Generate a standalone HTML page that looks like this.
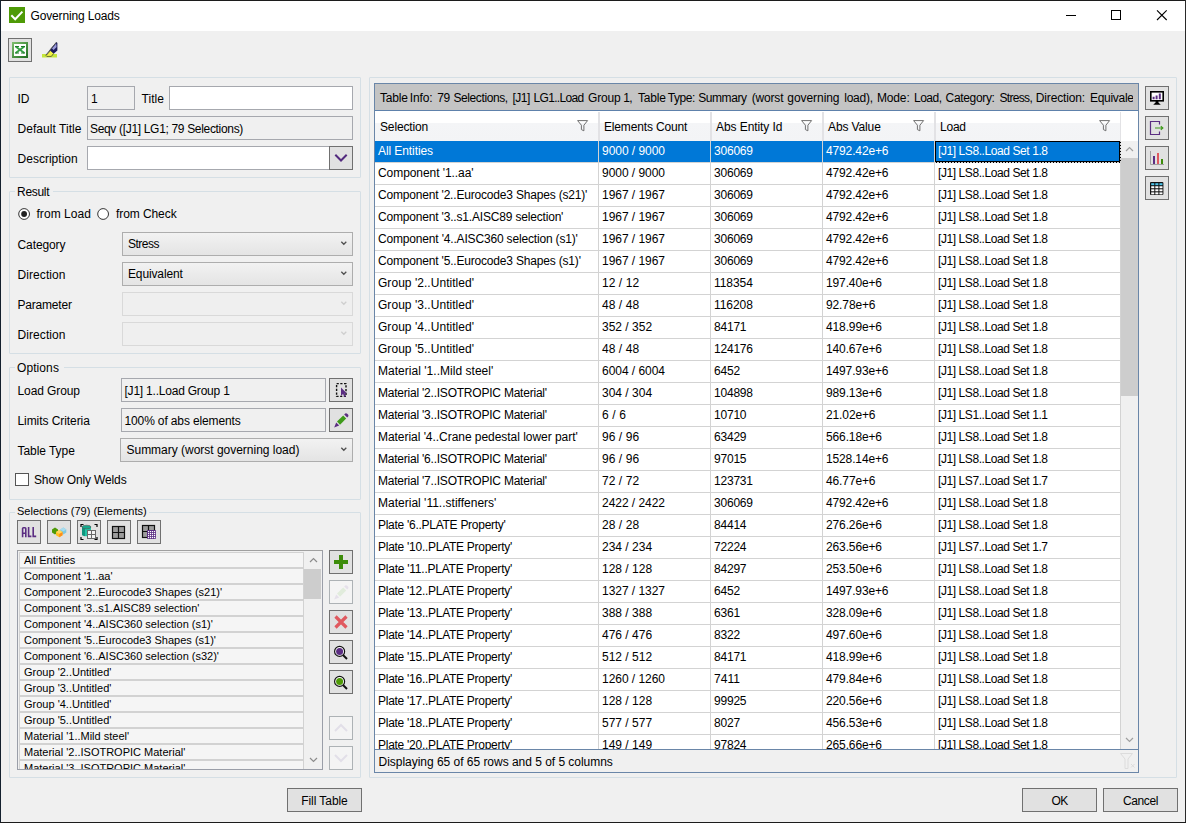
<!DOCTYPE html>
<html><head><meta charset="utf-8"><title>Governing Loads</title><style>

html,body{margin:0;padding:0}
body{width:1186px;height:823px;position:relative;overflow:hidden;background:#f0f0f0;font-family:"Liberation Sans", sans-serif;font-size:12px}
.b{position:absolute;box-sizing:border-box;display:block}
.t{position:absolute;white-space:nowrap;margin:0;padding:0}
.gb{border:1px solid #d5dfe5;border-radius:1px}
.in{border:1px solid #a6a8ae;background:#fff}
.ro{border:1px solid #a6a8ae;background:#f0f0f0}
.btn{border:1px solid #707070;background:#e1e1e1}
.btnd{border:1px solid #adb2b5;background:#f4f4f4}
.cb{border:1px solid #adadad;background:linear-gradient(#f2f2f2,#e4e4e4)}
.cbd{border:1px solid #d9d9d9;background:#efefef}
.tb{border:1px solid #adadad;background:#e1e1e1}

</style></head><body>
<div class="b" style="left:0px;top:0px;width:1186px;height:31px;background:#fff"></div>
<div class="b" style="left:0px;top:0px;width:1186px;height:1px;background:#1c1c1c"></div>
<div class="b" style="left:0px;top:0px;width:1px;height:823px;background:#14202e"></div>
<div class="b" style="left:1185px;top:0px;width:1px;height:823px;background:#2a2a2a"></div>
<div class="b" style="left:0px;top:822px;width:1186px;height:1px;background:#1c1c1c"></div>
<svg class="b" style="left:9px;top:7px" width="16" height="16" viewBox="0 0 16 16"><rect width="16" height="16" fill="#4e9a06"/><path d="M2.3 8.2 L6.2 12.2 L13.4 4.6" fill="none" stroke="#fff" stroke-width="2"/></svg>
<div class="t " style="left:30.5px;top:9px;line-height:14px;font-size:12px;color:#000;letter-spacing:-0.147px;">Governing Loads</div>
<svg class="b" style="left:1060px;top:5px" width="120" height="22" viewBox="0 0 120 22"><path d="M6 10.5H16" stroke="#000" stroke-width="1"/><rect x="51.5" y="5.5" width="9" height="9" fill="none" stroke="#000" stroke-width="1"/><path d="M97 5.3L106.7 15M106.7 5.3L97 15" stroke="#000" stroke-width="1.1"/></svg>
<div class="b btn" style="left:8px;top:38px;width:24px;height:24px;"></div>
<svg class="b" style="left:12px;top:42px" width="16" height="16" viewBox="0 0 16 16"><defs><linearGradient id="xg" x1="0" y1="0" x2="1" y2="1"><stop offset="0" stop-color="#7fbf6f"/><stop offset="1" stop-color="#1d6b1d"/></linearGradient></defs><rect width="16" height="16" fill="url(#xg)"/><rect x="2" y="2" width="12" height="12" fill="#fff"/><path d="M3.6 4.6L12.4 11M12.4 4.6L3.6 11" stroke="#35a044" stroke-width="1.9"/><path d="M3 4.5h4M9 4.5h4M3 11h4M9 11h4" stroke="#1f7a2a" stroke-width="1.2"/></svg>
<svg class="b" style="left:42px;top:41px" width="16" height="17" viewBox="0 0 16 17"><rect x="0" y="13" width="15" height="3.5" fill="#c4e63c"/><path d="M4 14.6L8.6 9.4L11.6 12.4L9.4 15.4H4.8Z" fill="#f2f244" stroke="#4a5030" stroke-width=".8"/><path d="M7.6 9L14.6 .9L15.4 2V9.4L11.8 12.6Z" fill="#1c1c5c"/><path d="M10 7.4L14.2 2.6L14.6 6L11.6 9Z" fill="#9a9ad8"/><path d="M4 14L14.4 1.2" stroke="#555" stroke-width="1"/></svg>
<div class="b gb" style="left:9px;top:77px;width:352px;height:101px"></div>
<div class="b gb" style="left:9px;top:191px;width:352px;height:163px"></div>
<div class="b" style="left:15px;top:191px;width:38px;height:1px;background:#f0f0f0"></div>
<div class="t " style="left:17px;top:185px;line-height:14px;font-size:12px;color:#000;letter-spacing:-0.285px;">Result</div>
<div class="b gb" style="left:9px;top:367px;width:352px;height:133px"></div>
<div class="b" style="left:15px;top:367px;width:49px;height:1px;background:#f0f0f0"></div>
<div class="t " style="left:17px;top:361px;line-height:14px;font-size:12px;color:#000;letter-spacing:0.088px;">Options</div>
<div class="b gb" style="left:9px;top:512px;width:352px;height:266px"></div>
<div class="b" style="left:15px;top:512px;width:134px;height:1px;background:#f0f0f0"></div>
<div class="t " style="left:17px;top:505px;line-height:13px;font-size:11px;color:#000;">Selections (79) (Elements)</div>
<div class="b gb" style="left:369px;top:77px;width:808px;height:701px"></div>
<div class="t " style="left:17.5px;top:92px;line-height:14px;font-size:12px;color:#000;letter-spacing:-0.196px;">ID</div>
<div class="b ro" style="left:87px;top:86px;width:48px;height:24px"></div>
<div class="t " style="left:91px;top:92px;line-height:14px;font-size:12px;color:#000;letter-spacing:-0.219px;">1</div>
<div class="t " style="left:141.5px;top:92px;line-height:14px;font-size:12px;color:#000;letter-spacing:0.041px;">Title</div>
<div class="b in" style="left:169px;top:86px;width:184px;height:24px"></div>
<div class="t " style="left:17.5px;top:122px;line-height:14px;font-size:12px;color:#000;letter-spacing:0.051px;">Default Title</div>
<div class="b ro" style="left:87px;top:116px;width:266px;height:24px"></div>
<div class="t " style="left:90px;top:122px;line-height:14px;font-size:12px;color:#000;letter-spacing:-0.326px;">Seqv ([J1] LG1; 79 Selections)</div>
<div class="t " style="left:17.5px;top:152px;line-height:14px;font-size:12px;color:#000;letter-spacing:0.019px;">Description</div>
<div class="b in" style="left:87px;top:146px;width:243px;height:24px"></div>
<div class="b btn" style="left:329px;top:146px;width:24px;height:24px"></div>
<svg class="b" style="left:329px;top:146px" width="24" height="24" viewBox="0 0 24 24"><path d="M6.3 8.8L12 14.5L17.7 8.8" fill="none" stroke="#532a7e" stroke-width="2"/></svg>
<svg class="b" style="left:18px;top:208px" width="13" height="13" viewBox="0 0 13 13"><circle cx="6.1" cy="6" r="5.4" fill="#fff" stroke="#333" stroke-width="1"/><circle cx="6.1" cy="6" r="2.9" fill="#222"/></svg>
<div class="t " style="left:36.5px;top:207px;line-height:14px;font-size:12px;color:#000;letter-spacing:0.041px;">from Load</div>
<svg class="b" style="left:97px;top:208px" width="13" height="13" viewBox="0 0 13 13"><circle cx="6.1" cy="6" r="5.4" fill="#fff" stroke="#333" stroke-width="1"/></svg>
<div class="t " style="left:116px;top:207px;line-height:14px;font-size:12px;color:#000;letter-spacing:-0.079px;">from Check</div>
<div class="t " style="left:17.5px;top:238px;line-height:14px;font-size:12px;color:#000;letter-spacing:-0.097px;">Category</div>
<div class="b cb" style="left:122px;top:232px;width:231px;height:24px"></div>
<svg class="b" style="left:339px;top:240px" width="9" height="8" viewBox="0 0 9 8"><path d="M2.3 1.8L4.8 4.3L7.3 1.8" fill="none" stroke="#505050" stroke-width="1.3"/></svg>
<div class="t " style="left:128px;top:237px;line-height:14px;font-size:12px;color:#000;letter-spacing:-0.492px;">Stress</div>
<div class="t " style="left:17.5px;top:268px;line-height:14px;font-size:12px;color:#000;letter-spacing:0.082px;">Direction</div>
<div class="b cb" style="left:122px;top:262px;width:231px;height:24px"></div>
<svg class="b" style="left:339px;top:270px" width="9" height="8" viewBox="0 0 9 8"><path d="M2.3 1.8L4.8 4.3L7.3 1.8" fill="none" stroke="#505050" stroke-width="1.3"/></svg>
<div class="t " style="left:128px;top:267px;line-height:14px;font-size:12px;color:#000;letter-spacing:-0.134px;">Equivalent</div>
<div class="t " style="left:17.5px;top:298px;line-height:14px;font-size:12px;color:#000;letter-spacing:-0.200px;">Parameter</div>
<div class="b cbd" style="left:122px;top:292px;width:231px;height:24px"></div>
<svg class="b" style="left:339px;top:300px" width="9" height="8" viewBox="0 0 9 8"><path d="M2.3 1.8L4.8 4.3L7.3 1.8" fill="none" stroke="#cfcfcf" stroke-width="1.3"/></svg>
<div class="t " style="left:17.5px;top:328px;line-height:14px;font-size:12px;color:#000;letter-spacing:0.082px;">Direction</div>
<div class="b cbd" style="left:122px;top:322px;width:231px;height:24px"></div>
<svg class="b" style="left:339px;top:330px" width="9" height="8" viewBox="0 0 9 8"><path d="M2.3 1.8L4.8 4.3L7.3 1.8" fill="none" stroke="#cfcfcf" stroke-width="1.3"/></svg>
<div class="t " style="left:17.5px;top:384px;line-height:14px;font-size:12px;color:#000;letter-spacing:-0.099px;">Load Group</div>
<div class="b ro" style="left:121px;top:378px;width:205px;height:24px"></div>
<div class="t " style="left:124.5px;top:384px;line-height:14px;font-size:12px;color:#000;letter-spacing:-0.215px;">[J1] 1..Load Group 1</div>
<div class="b btn" style="left:329px;top:378px;width:24px;height:24px"></div>
<svg class="b" style="left:329px;top:378px" width="24" height="24" viewBox="0 0 24 24"><rect x="7.6" y="5.6" width="9.4" height="12.8" fill="none" stroke="#111" stroke-width="1.4" stroke-dasharray="2.2 1.5"/><path d="M12 9.5V18L14 16L15.5 19L17 18.3L15.6 15.5H18Z" fill="#5b2d82"/></svg>
<div class="t " style="left:17.5px;top:414px;line-height:14px;font-size:12px;color:#000;letter-spacing:-0.072px;">Limits Criteria</div>
<div class="b ro" style="left:121px;top:408px;width:205px;height:24px"></div>
<div class="t " style="left:124.5px;top:414px;line-height:14px;font-size:12px;color:#000;letter-spacing:-0.131px;">100% of abs elements</div>
<div class="b btn" style="left:329px;top:408px;width:24px;height:24px"></div>
<svg class="b" style="left:329px;top:408px" width="24" height="24" viewBox="0 0 24 24"><g opacity="1"><path d="M8 13.6L14.2 7.6L17.2 10.6L11 16.8Z" fill="#3f9a1a"/><path d="M15.2 6.6L16.2 5.6Q17.2 4.9 18.2 5.8L19 6.6Q19.9 7.6 19.2 8.6L18.2 9.6Z" fill="#5b2d82"/><path d="M7.2 14.4L10.2 17.4L5.2 19.4Z" fill="#5b2d82"/></g></svg>
<div class="t " style="left:17.5px;top:444px;line-height:14px;font-size:12px;color:#000;letter-spacing:-0.050px;">Table Type</div>
<div class="b cb" style="left:120px;top:438px;width:233px;height:24px"></div>
<svg class="b" style="left:339px;top:446px" width="9" height="8" viewBox="0 0 9 8"><path d="M2.3 1.8L4.8 4.3L7.3 1.8" fill="none" stroke="#505050" stroke-width="1.3"/></svg>
<div class="t " style="left:126.5px;top:443px;line-height:14px;font-size:12px;color:#000;letter-spacing:-0.017px;">Summary (worst governing load)</div>
<div class="b" style="left:15px;top:473px;width:14px;height:13px;border:1px solid #555;background:#fff"></div>
<div class="t " style="left:34px;top:473px;line-height:14px;font-size:12px;color:#000;letter-spacing:-0.131px;">Show Only Welds</div>
<div class="b btn" style="left:17px;top:520px;width:24px;height:24px"></div>
<div class="b btn" style="left:47px;top:520px;width:24px;height:24px"></div>
<div class="b btn" style="left:77px;top:520px;width:24px;height:24px"></div>
<div class="b btn" style="left:107px;top:520px;width:24px;height:24px"></div>
<div class="b btn" style="left:137px;top:520px;width:24px;height:24px"></div>
<svg class="b" style="left:17px;top:520px" width="24" height="24" viewBox="0 0 24 24"><path d="M5.6 17.2V8.6Q5.6 7.8 6.4 7.8H8Q8.8 7.8 8.8 8.6V17.2M5.6 13.2H8.8M11.6 7V16.4H14.4M16.2 7V16.4H19.2" fill="none" stroke="#5b2d82" stroke-width="1.6"/></svg>
<svg class="b" style="left:47px;top:520px" width="24" height="24" viewBox="0 0 24 24"><path d="M5 9.5L8 7.5L11 9.5V12.5L8 14.5L5 12.5Z" fill="#4e9a06"/><path d="M13.3 9.5L16.3 7.5L19.3 9.5V12.5L16.3 14.5L13.3 12.5Z" fill="#7ec8e3"/><path d="M13.3 9.5L16.3 11.2L19.3 9.5L16.3 7.5Z" fill="#a8dcee"/><path d="M9 12L12.2 10L15.5 12V15.2L12.2 17.2L9 15.2Z" fill="#ffc020"/><path d="M12.2 13.8L15.5 12V15.2L12.2 17.2Z" fill="#ff8c1a"/><path d="M9 12L12.2 13.8L15.5 12L12.2 10Z" fill="#ffd860"/></svg>
<svg class="b" style="left:77px;top:520px" width="24" height="24" viewBox="0 0 24 24"><path d="M4 7V4.5H6.5M17.5 4.5H20V7M20 17V19.5H17.5M6.5 19.5H4V17" fill="none" stroke="#000" stroke-width="1.2"/><path d="M5 7V15Q9.5 17.5 14 15V7Z" fill="#20c4a4"/><path d="M5 7V15Q6.5 15.9 8 16.2V8Z" fill="#10937c"/><ellipse cx="9.5" cy="7" rx="4.5" ry="1.8" fill="#17a88c" stroke="#555" stroke-width=".6"/><rect x="10.5" y="10.5" width="8" height="8" fill="#f4f4f4" stroke="#6a6a6a" stroke-width="1"/><path d="M14.5 10.5V18.5M10.5 14.5H18.5" stroke="#6a6a6a" stroke-width="1"/></svg>
<svg class="b" style="left:107px;top:520px" width="24" height="24" viewBox="0 0 24 24"><rect x="5.5" y="6.5" width="12" height="12" fill="#9c9c9c" stroke="#111" stroke-width="1.2"/><path d="M11.5 6.5V18.5M5.5 12.5H17.5" stroke="#111" stroke-width="1.2"/></svg>
<svg class="b" style="left:137px;top:520px" width="24" height="24" viewBox="0 0 24 24"><rect x="5.5" y="5.5" width="12" height="12" fill="#9c9c9c" stroke="#111" stroke-width="1.2"/><path d="M11.5 5.5V17.5M5.5 11.5H17.5" stroke="#111" stroke-width="1.2"/><rect x="10" y="10" width="9" height="9" rx="1" fill="#5b2d82"/><rect x="11" y="11" width="1.2" height="1.2" fill="#fff"/><rect x="13" y="11" width="1.2" height="1.2" fill="#fff"/><rect x="15" y="11" width="1.2" height="1.2" fill="#fff"/><rect x="17" y="11" width="1.2" height="1.2" fill="#fff"/><rect x="11" y="13" width="1.2" height="1.2" fill="#fff"/><rect x="13" y="13" width="1.2" height="1.2" fill="#fff"/><rect x="15" y="13" width="1.2" height="1.2" fill="#fff"/><rect x="17" y="13" width="1.2" height="1.2" fill="#fff"/><rect x="11" y="15" width="1.2" height="1.2" fill="#fff"/><rect x="13" y="15" width="1.2" height="1.2" fill="#fff"/><rect x="15" y="15" width="1.2" height="1.2" fill="#fff"/><rect x="17" y="15" width="1.2" height="1.2" fill="#fff"/><rect x="11" y="17" width="1.2" height="1.2" fill="#fff"/><rect x="13" y="17" width="1.2" height="1.2" fill="#fff"/><rect x="15" y="17" width="1.2" height="1.2" fill="#fff"/><rect x="17" y="17" width="1.2" height="1.2" fill="#fff"/></svg>
<div class="b" style="left:17px;top:550px;width:306px;height:220px;border:1px solid #9a9ea8;background:#f0f0f0;border-top-color:#a0a0a0"></div>
<div class="b" style="left:18px;top:551px;width:304px;height:218px;overflow:hidden">
<div class="b" style="left:1px;top:1px;width:285px;height:16px;border:1px solid #d2d2d2;background:#f5f5f5"></div>
<div class="t" style="left:6px;top:3px;font-size:11px;line-height:13px;">All Entities</div>
<div class="b" style="left:1px;top:17px;width:285px;height:16px;border:1px solid #d2d2d2;background:#f5f5f5"></div>
<div class="t" style="left:6px;top:19px;font-size:11px;line-height:13px;">Component &#x27;1..aa&#x27;</div>
<div class="b" style="left:1px;top:33px;width:285px;height:16px;border:1px solid #d2d2d2;background:#f5f5f5"></div>
<div class="t" style="left:6px;top:35px;font-size:11px;line-height:13px;">Component &#x27;2..Eurocode3 Shapes (s21)&#x27;</div>
<div class="b" style="left:1px;top:49px;width:285px;height:16px;border:1px solid #d2d2d2;background:#f5f5f5"></div>
<div class="t" style="left:6px;top:51px;font-size:11px;line-height:13px;">Component &#x27;3..s1.AISC89 selection&#x27;</div>
<div class="b" style="left:1px;top:65px;width:285px;height:16px;border:1px solid #d2d2d2;background:#f5f5f5"></div>
<div class="t" style="left:6px;top:67px;font-size:11px;line-height:13px;">Component &#x27;4..AISC360 selection (s1)&#x27;</div>
<div class="b" style="left:1px;top:81px;width:285px;height:16px;border:1px solid #d2d2d2;background:#f5f5f5"></div>
<div class="t" style="left:6px;top:83px;font-size:11px;line-height:13px;">Component &#x27;5..Eurocode3 Shapes (s1)&#x27;</div>
<div class="b" style="left:1px;top:97px;width:285px;height:16px;border:1px solid #d2d2d2;background:#f5f5f5"></div>
<div class="t" style="left:6px;top:99px;font-size:11px;line-height:13px;">Component &#x27;6..AISC360 selection (s32)&#x27;</div>
<div class="b" style="left:1px;top:113px;width:285px;height:16px;border:1px solid #d2d2d2;background:#f5f5f5"></div>
<div class="t" style="left:6px;top:115px;font-size:11px;line-height:13px;">Group &#x27;2..Untitled&#x27;</div>
<div class="b" style="left:1px;top:129px;width:285px;height:16px;border:1px solid #d2d2d2;background:#f5f5f5"></div>
<div class="t" style="left:6px;top:131px;font-size:11px;line-height:13px;">Group &#x27;3..Untitled&#x27;</div>
<div class="b" style="left:1px;top:145px;width:285px;height:16px;border:1px solid #d2d2d2;background:#f5f5f5"></div>
<div class="t" style="left:6px;top:147px;font-size:11px;line-height:13px;">Group &#x27;4..Untitled&#x27;</div>
<div class="b" style="left:1px;top:161px;width:285px;height:16px;border:1px solid #d2d2d2;background:#f5f5f5"></div>
<div class="t" style="left:6px;top:163px;font-size:11px;line-height:13px;">Group &#x27;5..Untitled&#x27;</div>
<div class="b" style="left:1px;top:177px;width:285px;height:16px;border:1px solid #d2d2d2;background:#f5f5f5"></div>
<div class="t" style="left:6px;top:179px;font-size:11px;line-height:13px;">Material &#x27;1..Mild steel&#x27;</div>
<div class="b" style="left:1px;top:193px;width:285px;height:16px;border:1px solid #d2d2d2;background:#f5f5f5"></div>
<div class="t" style="left:6px;top:195px;font-size:11px;line-height:13px;">Material &#x27;2..ISOTROPIC Material&#x27;</div>
<div class="b" style="left:1px;top:209px;width:285px;height:16px;border:1px solid #d2d2d2;background:#f5f5f5"></div>
<div class="t" style="left:6px;top:211px;font-size:11px;line-height:13px;">Material &#x27;3..ISOTROPIC Material&#x27;</div>
</div>
<div class="b" style="left:304px;top:551px;width:18px;height:218px;background:#f0f0f0"></div>
<div class="b" style="left:304px;top:569px;width:17px;height:30px;background:#cdcdcd"></div>
<svg class="b" style="left:309px;top:556px" width="9" height="8" viewBox="0 0 9 8"><path d="M1 6L4.5 2.5L8 6" fill="none" stroke="#8c8c8c" stroke-width="1.2"/></svg>
<svg class="b" style="left:309px;top:756px" width="9" height="8" viewBox="0 0 9 8"><path d="M1 2L4.5 5.5L8 2" fill="none" stroke="#8c8c8c" stroke-width="1.2"/></svg>
<div class="b btn" style="left:329px;top:550px;width:24px;height:24px"></div>
<svg class="b" style="left:329px;top:550px" width="24" height="24" viewBox="0 0 24 24"><path d="M5 12H19M12 5V19" stroke="#3d8c0a" stroke-width="4"/></svg>
<div class="b btnd" style="left:329px;top:580px;width:24px;height:24px"></div>
<svg class="b" style="left:329px;top:580px" width="24" height="24" viewBox="0 0 24 24"><g opacity="1"><path d="M8 13.6L14.2 7.6L17.2 10.6L11 16.8Z" fill="#e1ecdc"/><path d="M15.2 6.6L16.2 5.6Q17.2 4.9 18.2 5.8L19 6.6Q19.9 7.6 19.2 8.6L18.2 9.6Z" fill="#e5e0ea"/><path d="M7.2 14.4L10.2 17.4L5.2 19.4Z" fill="#e5e0ea"/></g></svg>
<div class="b btn" style="left:329px;top:610px;width:24px;height:24px"></div>
<svg class="b" style="left:329px;top:610px" width="24" height="24" viewBox="0 0 24 24"><path d="M6.5 6.5L17.5 17.5M17.5 6.5L6.5 17.5" stroke="#e0595f" stroke-width="3.2"/></svg>
<div class="b btn" style="left:329px;top:640px;width:24px;height:24px"></div>
<svg class="b" style="left:329px;top:640px" width="24" height="24" viewBox="0 0 24 24"><path d="M14 15L18 19" stroke="#111" stroke-width="2"/><circle cx="10.6" cy="11.4" r="5" fill="#fff" stroke="#111" stroke-width="1.2"/><circle cx="10.6" cy="11.4" r="3.5" fill="#5b2d82"/></svg>
<div class="b btn" style="left:329px;top:670px;width:24px;height:24px"></div>
<svg class="b" style="left:329px;top:670px" width="24" height="24" viewBox="0 0 24 24"><path d="M14 15L18 19" stroke="#111" stroke-width="2"/><circle cx="10.6" cy="11.4" r="5" fill="#fff" stroke="#111" stroke-width="1.2"/><circle cx="10.6" cy="11.4" r="3.5" fill="#4e9a06"/></svg>
<div class="b btnd" style="left:329px;top:716px;width:24px;height:24px"></div>
<svg class="b" style="left:329px;top:716px" width="24" height="24" viewBox="0 0 24 24"><path d="M6 15L12 9L18 15" fill="none" stroke="#e2dfe8" stroke-width="2"/></svg>
<div class="b btnd" style="left:329px;top:746px;width:24px;height:24px"></div>
<svg class="b" style="left:329px;top:746px" width="24" height="24" viewBox="0 0 24 24"><path d="M6 9L12 15L18 9" fill="none" stroke="#e2dfe8" stroke-width="2"/></svg>
<div class="b btn" style="left:287px;top:788px;width:75px;height:24px"></div>
<div class="t " style="left:287px;top:794px;line-height:14px;font-size:12px;color:#000;letter-spacing:-0.065px;width:75px;text-align:center;">Fill Table</div>
<div class="b btn" style="left:1022px;top:788px;width:75px;height:24px"></div>
<div class="t " style="left:1022px;top:794px;line-height:14px;font-size:12px;color:#000;letter-spacing:-0.668px;width:75px;text-align:center;">OK</div>
<div class="b btn" style="left:1103px;top:788px;width:75px;height:24px"></div>
<div class="t " style="left:1103px;top:794px;line-height:14px;font-size:12px;color:#000;letter-spacing:-0.386px;width:75px;text-align:center;">Cancel</div>
<div class="b" style="left:374px;top:83px;width:765px;height:690px;border:1px solid #6a86a8;background:#fff"></div>
<div class="b" style="left:375px;top:84px;width:763px;height:26px;background:#c4c4c4;overflow:hidden"></div>
<div class="b" style="left:375px;top:84px;width:758px;height:26px;overflow:hidden">
<div class="t" style="left:5.0px;top:7px;line-height:14px;letter-spacing:-0.183px;">Table</div>
<div class="t" style="left:34.8px;top:7px;line-height:14px;letter-spacing:-0.140px;">Info:</div>
<div class="t" style="left:62.2px;top:7px;line-height:14px;letter-spacing:-0.405px;">79</div>
<div class="t" style="left:78.5px;top:7px;line-height:14px;letter-spacing:-0.412px;">Selections,</div>
<div class="t" style="left:137.4px;top:7px;line-height:14px;letter-spacing:-0.474px;">[J1]</div>
<div class="t" style="left:158.6px;top:7px;line-height:14px;letter-spacing:-0.689px;">LG1..Load</div>
<div class="t" style="left:213.1px;top:7px;line-height:14px;letter-spacing:-0.215px;">Group</div>
<div class="t" style="left:248.2px;top:7px;line-height:14px;letter-spacing:-0.609px;">1,</div>
<div class="t" style="left:262.9px;top:7px;line-height:14px;letter-spacing:-0.183px;">Table</div>
<div class="t" style="left:292.8px;top:7px;line-height:14px;letter-spacing:-0.437px;">Type:</div>
<div class="t" style="left:323.2px;top:7px;line-height:14px;letter-spacing:-0.420px;">Summary</div>
<div class="t" style="left:376.7px;top:7px;line-height:14px;letter-spacing:-0.170px;">(worst</div>
<div class="t" style="left:412.3px;top:7px;line-height:14px;letter-spacing:-0.058px;">governing</div>
<div class="t" style="left:469.3px;top:7px;line-height:14px;letter-spacing:-0.266px;">load),</div>
<div class="t" style="left:501.9px;top:7px;line-height:14px;letter-spacing:-0.129px;">Mode:</div>
<div class="t" style="left:539.0px;top:7px;line-height:14px;letter-spacing:-0.491px;">Load,</div>
<div class="t" style="left:570.6px;top:7px;line-height:14px;letter-spacing:-0.336px;">Category:</div>
<div class="t" style="left:624.4px;top:7px;line-height:14px;letter-spacing:-0.669px;">Stress,</div>
<div class="t" style="left:660.8px;top:7px;line-height:14px;letter-spacing:-0.151px;">Direction:</div>
<div class="t" style="left:715.0px;top:7px;line-height:14px;letter-spacing:-0.298px;">Equivalent</div>
</div>
<div class="b" style="left:375px;top:110px;width:763px;height:1px;background:#5e81ab"></div>
<div class="b" style="left:375px;top:111px;width:746px;height:30px;background:linear-gradient(#fff 0,#fff 40%,#f4f5f7 41%,#f3f4f6 100%)"></div>
<div class="t " style="left:380px;top:120px;line-height:14px;font-size:12px;color:#000;letter-spacing:-0.136px;">Selection</div>
<svg class="b" style="left:577px;top:120px" width="12" height="12" viewBox="0 0 12 12"><path d="M.6 .6H10.6L6.9 5.2V10.8L4.4 9.6V5.2Z" fill="none" stroke="#707070" stroke-width="1"/></svg>
<div class="t " style="left:604px;top:120px;line-height:14px;font-size:12px;color:#000;letter-spacing:-0.158px;">Elements Count</div>
<div class="b" style="left:598px;top:112px;width:2px;height:29px;background:#e2e2e5"></div>
<div class="t " style="left:716px;top:120px;line-height:14px;font-size:12px;color:#000;letter-spacing:-0.075px;">Abs Entity Id</div>
<div class="b" style="left:710px;top:112px;width:2px;height:29px;background:#e2e2e5"></div>
<svg class="b" style="left:801px;top:120px" width="12" height="12" viewBox="0 0 12 12"><path d="M.6 .6H10.6L6.9 5.2V10.8L4.4 9.6V5.2Z" fill="none" stroke="#707070" stroke-width="1"/></svg>
<div class="t " style="left:828px;top:120px;line-height:14px;font-size:12px;color:#000;letter-spacing:-0.121px;">Abs Value</div>
<div class="b" style="left:822px;top:112px;width:2px;height:29px;background:#e2e2e5"></div>
<svg class="b" style="left:913px;top:120px" width="12" height="12" viewBox="0 0 12 12"><path d="M.6 .6H10.6L6.9 5.2V10.8L4.4 9.6V5.2Z" fill="none" stroke="#707070" stroke-width="1"/></svg>
<div class="t " style="left:940px;top:120px;line-height:14px;font-size:12px;color:#000;letter-spacing:-0.219px;">Load</div>
<div class="b" style="left:934px;top:112px;width:2px;height:29px;background:#e2e2e5"></div>
<svg class="b" style="left:1099px;top:120px" width="12" height="12" viewBox="0 0 12 12"><path d="M.6 .6H10.6L6.9 5.2V10.8L4.4 9.6V5.2Z" fill="none" stroke="#707070" stroke-width="1"/></svg>
<div class="b" style="left:1120px;top:112px;width:1px;height:29px;background:#e2e2e5"></div>
<div class="b" style="left:375px;top:141px;width:746px;height:608px;overflow:hidden;background:#fff">
<div class="b" style="left:0;top:0px;width:746px;height:21px;background:#0078d7"></div>
<div class="b" style="left:0;top:21px;width:746px;height:1px;background:#d3d3d3"></div>
<div class="t" style="left:3px;top:3px;line-height:14px;color:#fff;letter-spacing:-0.085px;">All Entities</div>
<div class="t" style="left:227px;top:3px;line-height:14px;color:#fff;letter-spacing:-0.036px;">9000 / 9000</div>
<div class="t" style="left:339px;top:3px;line-height:14px;color:#fff;letter-spacing:-0.206px;">306069</div>
<div class="t" style="left:451px;top:3px;line-height:14px;color:#fff;letter-spacing:-0.137px;">4792.42e+6</div>
<div class="t" style="left:563px;top:3px;line-height:14px;color:#fff;letter-spacing:-0.416px;">[J1] LS8..Load Set 1.8</div>
<div class="b" style="left:0;top:43px;width:746px;height:1px;background:#d3d3d3"></div>
<div class="t" style="left:3px;top:25px;line-height:14px;color:#000;letter-spacing:-0.070px;">Component &#x27;1..aa&#x27;</div>
<div class="t" style="left:227px;top:25px;line-height:14px;color:#000;letter-spacing:-0.036px;">9000 / 9000</div>
<div class="t" style="left:339px;top:25px;line-height:14px;color:#000;letter-spacing:-0.206px;">306069</div>
<div class="t" style="left:451px;top:25px;line-height:14px;color:#000;letter-spacing:-0.137px;">4792.42e+6</div>
<div class="t" style="left:563px;top:25px;line-height:14px;color:#000;letter-spacing:-0.416px;">[J1] LS8..Load Set 1.8</div>
<div class="b" style="left:0;top:65px;width:746px;height:1px;background:#d3d3d3"></div>
<div class="t" style="left:3px;top:47px;line-height:14px;color:#000;letter-spacing:-0.185px;">Component &#x27;2..Eurocode3 Shapes (s21)&#x27;</div>
<div class="t" style="left:227px;top:47px;line-height:14px;color:#000;letter-spacing:-0.036px;">1967 / 1967</div>
<div class="t" style="left:339px;top:47px;line-height:14px;color:#000;letter-spacing:-0.206px;">306069</div>
<div class="t" style="left:451px;top:47px;line-height:14px;color:#000;letter-spacing:-0.137px;">4792.42e+6</div>
<div class="t" style="left:563px;top:47px;line-height:14px;color:#000;letter-spacing:-0.416px;">[J1] LS8..Load Set 1.8</div>
<div class="b" style="left:0;top:87px;width:746px;height:1px;background:#d3d3d3"></div>
<div class="t" style="left:3px;top:69px;line-height:14px;color:#000;letter-spacing:-0.180px;">Component &#x27;3..s1.AISC89 selection&#x27;</div>
<div class="t" style="left:227px;top:69px;line-height:14px;color:#000;letter-spacing:-0.036px;">1967 / 1967</div>
<div class="t" style="left:339px;top:69px;line-height:14px;color:#000;letter-spacing:-0.206px;">306069</div>
<div class="t" style="left:451px;top:69px;line-height:14px;color:#000;letter-spacing:-0.137px;">4792.42e+6</div>
<div class="t" style="left:563px;top:69px;line-height:14px;color:#000;letter-spacing:-0.416px;">[J1] LS8..Load Set 1.8</div>
<div class="b" style="left:0;top:109px;width:746px;height:1px;background:#d3d3d3"></div>
<div class="t" style="left:3px;top:91px;line-height:14px;color:#000;letter-spacing:-0.172px;">Component &#x27;4..AISC360 selection (s1)&#x27;</div>
<div class="t" style="left:227px;top:91px;line-height:14px;color:#000;letter-spacing:-0.036px;">1967 / 1967</div>
<div class="t" style="left:339px;top:91px;line-height:14px;color:#000;letter-spacing:-0.206px;">306069</div>
<div class="t" style="left:451px;top:91px;line-height:14px;color:#000;letter-spacing:-0.137px;">4792.42e+6</div>
<div class="t" style="left:563px;top:91px;line-height:14px;color:#000;letter-spacing:-0.416px;">[J1] LS8..Load Set 1.8</div>
<div class="b" style="left:0;top:131px;width:746px;height:1px;background:#d3d3d3"></div>
<div class="t" style="left:3px;top:113px;line-height:14px;color:#000;letter-spacing:-0.184px;">Component &#x27;5..Eurocode3 Shapes (s1)&#x27;</div>
<div class="t" style="left:227px;top:113px;line-height:14px;color:#000;letter-spacing:-0.036px;">1967 / 1967</div>
<div class="t" style="left:339px;top:113px;line-height:14px;color:#000;letter-spacing:-0.206px;">306069</div>
<div class="t" style="left:451px;top:113px;line-height:14px;color:#000;letter-spacing:-0.137px;">4792.42e+6</div>
<div class="t" style="left:563px;top:113px;line-height:14px;color:#000;letter-spacing:-0.416px;">[J1] LS8..Load Set 1.8</div>
<div class="b" style="left:0;top:153px;width:746px;height:1px;background:#d3d3d3"></div>
<div class="t" style="left:3px;top:135px;line-height:14px;color:#000;letter-spacing:0.041px;">Group &#x27;2..Untitled&#x27;</div>
<div class="t" style="left:227px;top:135px;line-height:14px;color:#000;letter-spacing:0.061px;">12 / 12</div>
<div class="t" style="left:339px;top:135px;line-height:14px;color:#000;letter-spacing:-0.057px;">118354</div>
<div class="t" style="left:451px;top:135px;line-height:14px;color:#000;letter-spacing:-0.129px;">197.40e+6</div>
<div class="t" style="left:563px;top:135px;line-height:14px;color:#000;letter-spacing:-0.416px;">[J1] LS8..Load Set 1.8</div>
<div class="b" style="left:0;top:175px;width:746px;height:1px;background:#d3d3d3"></div>
<div class="t" style="left:3px;top:157px;line-height:14px;color:#000;letter-spacing:0.041px;">Group &#x27;3..Untitled&#x27;</div>
<div class="t" style="left:227px;top:157px;line-height:14px;color:#000;letter-spacing:0.061px;">48 / 48</div>
<div class="t" style="left:339px;top:157px;line-height:14px;color:#000;letter-spacing:-0.057px;">116208</div>
<div class="t" style="left:451px;top:157px;line-height:14px;color:#000;letter-spacing:-0.120px;">92.78e+6</div>
<div class="t" style="left:563px;top:157px;line-height:14px;color:#000;letter-spacing:-0.416px;">[J1] LS8..Load Set 1.8</div>
<div class="b" style="left:0;top:197px;width:746px;height:1px;background:#d3d3d3"></div>
<div class="t" style="left:3px;top:179px;line-height:14px;color:#000;letter-spacing:0.041px;">Group &#x27;4..Untitled&#x27;</div>
<div class="t" style="left:227px;top:179px;line-height:14px;color:#000;letter-spacing:0.002px;">352 / 352</div>
<div class="t" style="left:339px;top:179px;line-height:14px;color:#000;letter-spacing:-0.206px;">84171</div>
<div class="t" style="left:451px;top:179px;line-height:14px;color:#000;letter-spacing:-0.129px;">418.99e+6</div>
<div class="t" style="left:563px;top:179px;line-height:14px;color:#000;letter-spacing:-0.416px;">[J1] LS8..Load Set 1.8</div>
<div class="b" style="left:0;top:219px;width:746px;height:1px;background:#d3d3d3"></div>
<div class="t" style="left:3px;top:201px;line-height:14px;color:#000;letter-spacing:0.041px;">Group &#x27;5..Untitled&#x27;</div>
<div class="t" style="left:227px;top:201px;line-height:14px;color:#000;letter-spacing:0.061px;">48 / 48</div>
<div class="t" style="left:339px;top:201px;line-height:14px;color:#000;letter-spacing:-0.206px;">124176</div>
<div class="t" style="left:451px;top:201px;line-height:14px;color:#000;letter-spacing:-0.129px;">140.67e+6</div>
<div class="t" style="left:563px;top:201px;line-height:14px;color:#000;letter-spacing:-0.416px;">[J1] LS8..Load Set 1.8</div>
<div class="b" style="left:0;top:241px;width:746px;height:1px;background:#d3d3d3"></div>
<div class="t" style="left:3px;top:223px;line-height:14px;color:#000;letter-spacing:0.029px;">Material &#x27;1..Mild steel&#x27;</div>
<div class="t" style="left:227px;top:223px;line-height:14px;color:#000;letter-spacing:-0.036px;">6004 / 6004</div>
<div class="t" style="left:339px;top:223px;line-height:14px;color:#000;letter-spacing:-0.207px;">6452</div>
<div class="t" style="left:451px;top:223px;line-height:14px;color:#000;letter-spacing:-0.137px;">1497.93e+6</div>
<div class="t" style="left:563px;top:223px;line-height:14px;color:#000;letter-spacing:-0.416px;">[J1] LS8..Load Set 1.8</div>
<div class="b" style="left:0;top:263px;width:746px;height:1px;background:#d3d3d3"></div>
<div class="t" style="left:3px;top:245px;line-height:14px;color:#000;letter-spacing:-0.222px;">Material &#x27;2..ISOTROPIC Material&#x27;</div>
<div class="t" style="left:227px;top:245px;line-height:14px;color:#000;letter-spacing:0.002px;">304 / 304</div>
<div class="t" style="left:339px;top:245px;line-height:14px;color:#000;letter-spacing:-0.206px;">104898</div>
<div class="t" style="left:451px;top:245px;line-height:14px;color:#000;letter-spacing:-0.129px;">989.13e+6</div>
<div class="t" style="left:563px;top:245px;line-height:14px;color:#000;letter-spacing:-0.416px;">[J1] LS8..Load Set 1.8</div>
<div class="b" style="left:0;top:285px;width:746px;height:1px;background:#d3d3d3"></div>
<div class="t" style="left:3px;top:267px;line-height:14px;color:#000;letter-spacing:-0.222px;">Material &#x27;3..ISOTROPIC Material&#x27;</div>
<div class="t" style="left:227px;top:267px;line-height:14px;color:#000;letter-spacing:0.167px;">6 / 6</div>
<div class="t" style="left:339px;top:267px;line-height:14px;color:#000;letter-spacing:-0.206px;">10710</div>
<div class="t" style="left:451px;top:267px;line-height:14px;color:#000;letter-spacing:-0.120px;">21.02e+6</div>
<div class="t" style="left:563px;top:267px;line-height:14px;color:#000;letter-spacing:-0.416px;">[J1] LS1..Load Set 1.1</div>
<div class="b" style="left:0;top:307px;width:746px;height:1px;background:#d3d3d3"></div>
<div class="t" style="left:3px;top:289px;line-height:14px;color:#000;letter-spacing:-0.043px;">Material &#x27;4..Crane pedestal lower part&#x27;</div>
<div class="t" style="left:227px;top:289px;line-height:14px;color:#000;letter-spacing:0.061px;">96 / 96</div>
<div class="t" style="left:339px;top:289px;line-height:14px;color:#000;letter-spacing:-0.206px;">63429</div>
<div class="t" style="left:451px;top:289px;line-height:14px;color:#000;letter-spacing:-0.129px;">566.18e+6</div>
<div class="t" style="left:563px;top:289px;line-height:14px;color:#000;letter-spacing:-0.416px;">[J1] LS8..Load Set 1.8</div>
<div class="b" style="left:0;top:329px;width:746px;height:1px;background:#d3d3d3"></div>
<div class="t" style="left:3px;top:311px;line-height:14px;color:#000;letter-spacing:-0.222px;">Material &#x27;6..ISOTROPIC Material&#x27;</div>
<div class="t" style="left:227px;top:311px;line-height:14px;color:#000;letter-spacing:0.061px;">96 / 96</div>
<div class="t" style="left:339px;top:311px;line-height:14px;color:#000;letter-spacing:-0.206px;">97015</div>
<div class="t" style="left:451px;top:311px;line-height:14px;color:#000;letter-spacing:-0.137px;">1528.14e+6</div>
<div class="t" style="left:563px;top:311px;line-height:14px;color:#000;letter-spacing:-0.416px;">[J1] LS8..Load Set 1.8</div>
<div class="b" style="left:0;top:351px;width:746px;height:1px;background:#d3d3d3"></div>
<div class="t" style="left:3px;top:333px;line-height:14px;color:#000;letter-spacing:-0.222px;">Material &#x27;7..ISOTROPIC Material&#x27;</div>
<div class="t" style="left:227px;top:333px;line-height:14px;color:#000;letter-spacing:0.061px;">72 / 72</div>
<div class="t" style="left:339px;top:333px;line-height:14px;color:#000;letter-spacing:-0.206px;">123731</div>
<div class="t" style="left:451px;top:333px;line-height:14px;color:#000;letter-spacing:-0.120px;">46.77e+6</div>
<div class="t" style="left:563px;top:333px;line-height:14px;color:#000;letter-spacing:-0.416px;">[J1] LS7..Load Set 1.7</div>
<div class="b" style="left:0;top:373px;width:746px;height:1px;background:#d3d3d3"></div>
<div class="t" style="left:3px;top:355px;line-height:14px;color:#000;letter-spacing:0.009px;">Material &#x27;11..stiffeners&#x27;</div>
<div class="t" style="left:227px;top:355px;line-height:14px;color:#000;letter-spacing:-0.036px;">2422 / 2422</div>
<div class="t" style="left:339px;top:355px;line-height:14px;color:#000;letter-spacing:-0.206px;">306069</div>
<div class="t" style="left:451px;top:355px;line-height:14px;color:#000;letter-spacing:-0.137px;">4792.42e+6</div>
<div class="t" style="left:563px;top:355px;line-height:14px;color:#000;letter-spacing:-0.416px;">[J1] LS8..Load Set 1.8</div>
<div class="b" style="left:0;top:395px;width:746px;height:1px;background:#d3d3d3"></div>
<div class="t" style="left:3px;top:377px;line-height:14px;color:#000;letter-spacing:-0.274px;">Plate &#x27;6..PLATE Property&#x27;</div>
<div class="t" style="left:227px;top:377px;line-height:14px;color:#000;letter-spacing:0.061px;">28 / 28</div>
<div class="t" style="left:339px;top:377px;line-height:14px;color:#000;letter-spacing:-0.206px;">84414</div>
<div class="t" style="left:451px;top:377px;line-height:14px;color:#000;letter-spacing:-0.129px;">276.26e+6</div>
<div class="t" style="left:563px;top:377px;line-height:14px;color:#000;letter-spacing:-0.416px;">[J1] LS8..Load Set 1.8</div>
<div class="b" style="left:0;top:417px;width:746px;height:1px;background:#d3d3d3"></div>
<div class="t" style="left:3px;top:399px;line-height:14px;color:#000;letter-spacing:-0.271px;">Plate &#x27;10..PLATE Property&#x27;</div>
<div class="t" style="left:227px;top:399px;line-height:14px;color:#000;letter-spacing:0.002px;">234 / 234</div>
<div class="t" style="left:339px;top:399px;line-height:14px;color:#000;letter-spacing:-0.206px;">72224</div>
<div class="t" style="left:451px;top:399px;line-height:14px;color:#000;letter-spacing:-0.129px;">263.56e+6</div>
<div class="t" style="left:563px;top:399px;line-height:14px;color:#000;letter-spacing:-0.416px;">[J1] LS7..Load Set 1.7</div>
<div class="b" style="left:0;top:439px;width:746px;height:1px;background:#d3d3d3"></div>
<div class="t" style="left:3px;top:421px;line-height:14px;color:#000;letter-spacing:-0.237px;">Plate &#x27;11..PLATE Property&#x27;</div>
<div class="t" style="left:227px;top:421px;line-height:14px;color:#000;letter-spacing:0.002px;">128 / 128</div>
<div class="t" style="left:339px;top:421px;line-height:14px;color:#000;letter-spacing:-0.206px;">84297</div>
<div class="t" style="left:451px;top:421px;line-height:14px;color:#000;letter-spacing:-0.129px;">253.50e+6</div>
<div class="t" style="left:563px;top:421px;line-height:14px;color:#000;letter-spacing:-0.416px;">[J1] LS8..Load Set 1.8</div>
<div class="b" style="left:0;top:461px;width:746px;height:1px;background:#d3d3d3"></div>
<div class="t" style="left:3px;top:443px;line-height:14px;color:#000;letter-spacing:-0.271px;">Plate &#x27;12..PLATE Property&#x27;</div>
<div class="t" style="left:227px;top:443px;line-height:14px;color:#000;letter-spacing:-0.036px;">1327 / 1327</div>
<div class="t" style="left:339px;top:443px;line-height:14px;color:#000;letter-spacing:-0.207px;">6452</div>
<div class="t" style="left:451px;top:443px;line-height:14px;color:#000;letter-spacing:-0.137px;">1497.93e+6</div>
<div class="t" style="left:563px;top:443px;line-height:14px;color:#000;letter-spacing:-0.416px;">[J1] LS8..Load Set 1.8</div>
<div class="b" style="left:0;top:483px;width:746px;height:1px;background:#d3d3d3"></div>
<div class="t" style="left:3px;top:465px;line-height:14px;color:#000;letter-spacing:-0.271px;">Plate &#x27;13..PLATE Property&#x27;</div>
<div class="t" style="left:227px;top:465px;line-height:14px;color:#000;letter-spacing:0.002px;">388 / 388</div>
<div class="t" style="left:339px;top:465px;line-height:14px;color:#000;letter-spacing:-0.207px;">6361</div>
<div class="t" style="left:451px;top:465px;line-height:14px;color:#000;letter-spacing:-0.129px;">328.09e+6</div>
<div class="t" style="left:563px;top:465px;line-height:14px;color:#000;letter-spacing:-0.416px;">[J1] LS8..Load Set 1.8</div>
<div class="b" style="left:0;top:505px;width:746px;height:1px;background:#d3d3d3"></div>
<div class="t" style="left:3px;top:487px;line-height:14px;color:#000;letter-spacing:-0.271px;">Plate &#x27;14..PLATE Property&#x27;</div>
<div class="t" style="left:227px;top:487px;line-height:14px;color:#000;letter-spacing:0.002px;">476 / 476</div>
<div class="t" style="left:339px;top:487px;line-height:14px;color:#000;letter-spacing:-0.207px;">8322</div>
<div class="t" style="left:451px;top:487px;line-height:14px;color:#000;letter-spacing:-0.129px;">497.60e+6</div>
<div class="t" style="left:563px;top:487px;line-height:14px;color:#000;letter-spacing:-0.416px;">[J1] LS8..Load Set 1.8</div>
<div class="b" style="left:0;top:527px;width:746px;height:1px;background:#d3d3d3"></div>
<div class="t" style="left:3px;top:509px;line-height:14px;color:#000;letter-spacing:-0.271px;">Plate &#x27;15..PLATE Property&#x27;</div>
<div class="t" style="left:227px;top:509px;line-height:14px;color:#000;letter-spacing:0.002px;">512 / 512</div>
<div class="t" style="left:339px;top:509px;line-height:14px;color:#000;letter-spacing:-0.206px;">84171</div>
<div class="t" style="left:451px;top:509px;line-height:14px;color:#000;letter-spacing:-0.129px;">418.99e+6</div>
<div class="t" style="left:563px;top:509px;line-height:14px;color:#000;letter-spacing:-0.416px;">[J1] LS8..Load Set 1.8</div>
<div class="b" style="left:0;top:549px;width:746px;height:1px;background:#d3d3d3"></div>
<div class="t" style="left:3px;top:531px;line-height:14px;color:#000;letter-spacing:-0.271px;">Plate &#x27;16..PLATE Property&#x27;</div>
<div class="t" style="left:227px;top:531px;line-height:14px;color:#000;letter-spacing:-0.036px;">1260 / 1260</div>
<div class="t" style="left:339px;top:531px;line-height:14px;color:#000;letter-spacing:0.016px;">7411</div>
<div class="t" style="left:451px;top:531px;line-height:14px;color:#000;letter-spacing:-0.129px;">479.84e+6</div>
<div class="t" style="left:563px;top:531px;line-height:14px;color:#000;letter-spacing:-0.416px;">[J1] LS8..Load Set 1.8</div>
<div class="b" style="left:0;top:571px;width:746px;height:1px;background:#d3d3d3"></div>
<div class="t" style="left:3px;top:553px;line-height:14px;color:#000;letter-spacing:-0.271px;">Plate &#x27;17..PLATE Property&#x27;</div>
<div class="t" style="left:227px;top:553px;line-height:14px;color:#000;letter-spacing:0.002px;">128 / 128</div>
<div class="t" style="left:339px;top:553px;line-height:14px;color:#000;letter-spacing:-0.206px;">99925</div>
<div class="t" style="left:451px;top:553px;line-height:14px;color:#000;letter-spacing:-0.129px;">220.56e+6</div>
<div class="t" style="left:563px;top:553px;line-height:14px;color:#000;letter-spacing:-0.416px;">[J1] LS8..Load Set 1.8</div>
<div class="b" style="left:0;top:593px;width:746px;height:1px;background:#d3d3d3"></div>
<div class="t" style="left:3px;top:575px;line-height:14px;color:#000;letter-spacing:-0.271px;">Plate &#x27;18..PLATE Property&#x27;</div>
<div class="t" style="left:227px;top:575px;line-height:14px;color:#000;letter-spacing:0.002px;">577 / 577</div>
<div class="t" style="left:339px;top:575px;line-height:14px;color:#000;letter-spacing:-0.207px;">8027</div>
<div class="t" style="left:451px;top:575px;line-height:14px;color:#000;letter-spacing:-0.129px;">456.53e+6</div>
<div class="t" style="left:563px;top:575px;line-height:14px;color:#000;letter-spacing:-0.416px;">[J1] LS8..Load Set 1.8</div>
<div class="b" style="left:0;top:615px;width:746px;height:1px;background:#d3d3d3"></div>
<div class="t" style="left:3px;top:597px;line-height:14px;color:#000;letter-spacing:-0.271px;">Plate &#x27;20..PLATE Property&#x27;</div>
<div class="t" style="left:227px;top:597px;line-height:14px;color:#000;letter-spacing:0.002px;">149 / 149</div>
<div class="t" style="left:339px;top:597px;line-height:14px;color:#000;letter-spacing:-0.206px;">97824</div>
<div class="t" style="left:451px;top:597px;line-height:14px;color:#000;letter-spacing:-0.129px;">265.66e+6</div>
<div class="t" style="left:563px;top:597px;line-height:14px;color:#000;letter-spacing:-0.416px;">[J1] LS8..Load Set 1.8</div>
<div class="b" style="left:223px;top:0;width:1px;height:608px;background:#d3d3d3"></div>
<div class="b" style="left:335px;top:0;width:1px;height:608px;background:#d3d3d3"></div>
<div class="b" style="left:447px;top:0;width:1px;height:608px;background:#d3d3d3"></div>
<div class="b" style="left:559px;top:0;width:1px;height:608px;background:#d3d3d3"></div>
<div class="b" style="left:745px;top:0;width:1px;height:608px;background:#d3d3d3"></div>
<div class="b" style="left:560px;top:0;width:185px;height:21px;border:1px solid #000"></div>
</div>
<div class="b" style="left:1121px;top:111px;width:17px;height:30px;background:#fff"></div>
<div class="b" style="left:1121px;top:141px;width:17px;height:608px;background:#f0f0f0"></div>
<div class="b" style="left:1121px;top:158px;width:17px;height:238px;background:#cdcdcd"></div>
<svg class="b" style="left:1125px;top:145px" width="9" height="8" viewBox="0 0 9 8"><path d="M1 6L4.5 2.5L8 6" fill="none" stroke="#a0a0a0" stroke-width="1.2"/></svg>
<svg class="b" style="left:1125px;top:736px" width="9" height="8" viewBox="0 0 9 8"><path d="M1 2L4.5 5.5L8 2" fill="none" stroke="#a0a0a0" stroke-width="1.2"/></svg>
<div class="b" style="left:1120px;top:142px;width:1px;height:21px;background:repeating-linear-gradient(to bottom,#000 0,#000 1px,transparent 1px,transparent 3px)"></div>
<div class="b" style="left:936px;top:162px;width:185px;height:1px;background:repeating-linear-gradient(to right,#000 0,#000 1px,transparent 1px,transparent 3px)"></div>
<div class="b" style="left:375px;top:749px;width:763px;height:1px;background:#6a86a8"></div>
<div class="b" style="left:375px;top:750px;width:763px;height:22px;background:#f0f0f0"></div>
<div class="t " style="left:378.5px;top:755px;line-height:14px;font-size:12px;color:#000;letter-spacing:-0.026px;">Displaying 65 of 65 rows and 5 of 5 columns</div>
<svg class="b" style="left:1119px;top:752px" width="18" height="18" viewBox="0 0 18 18"><path d="M1.5 1.5H13.5L9 7V16.5H6V7Z" fill="none" stroke="#dcdcdc" stroke-width="1"/><path d="M12 12L15.5 15.5M15.5 12L12 15.5" stroke="#dcdcdc" stroke-width="1"/></svg>
<div class="b btn" style="left:1145px;top:86px;width:24px;height:24px"></div>
<div class="b btn" style="left:1145px;top:116px;width:24px;height:24px"></div>
<div class="b btn" style="left:1145px;top:146px;width:24px;height:24px"></div>
<div class="b btn" style="left:1145px;top:176px;width:24px;height:24px"></div>
<svg class="b" style="left:1145px;top:86px" width="24" height="24" viewBox="0 0 24 24"><rect x="5.8" y="5.8" width="12.4" height="9" fill="#fff" stroke="#000" stroke-width="1.6"/><path d="M10.6 15H13.4V16.6L15.8 18.8H8.2L10.6 16.6Z" fill="#000"/><path d="M8.6 10.8V13.2M11.6 9.4V13.2M14.8 7.6V13.2" stroke="#5b2d82" stroke-width="2"/></svg>
<svg class="b" style="left:1145px;top:116px" width="24" height="24" viewBox="0 0 24 24"><path d="M14.5 8.5V5.5H5.5V18.5H14.5V15.5" fill="none" stroke="#5b2d82" stroke-width="1.2"/><path d="M10 12H17.8M15.8 10.2L17.9 12L15.8 13.8" fill="none" stroke="#3f9a1a" stroke-width="1.1"/></svg>
<svg class="b" style="left:1145px;top:146px" width="24" height="24" viewBox="0 0 24 24"><path d="M5.5 5V18.5H19" fill="none" stroke="#a0a0a0" stroke-width="1"/><rect x="8" y="10" width="2" height="8" fill="#5b2d82"/><rect x="12" y="7" width="2" height="11" fill="#e0595f"/><rect x="16" y="13" width="2" height="5" fill="#3d8c0a"/></svg>
<svg class="b" style="left:1145px;top:176px" width="24" height="24" viewBox="0 0 24 24"><rect x="5" y="6" width="13.4" height="13" rx="1" fill="#111"/><rect x="6.2" y="7.20" width="3.1" height="2" fill="#4cc3e8"/><rect x="10.3" y="7.20" width="3.1" height="2" fill="#4cc3e8"/><rect x="14.4" y="7.20" width="3.1" height="2" fill="#4cc3e8"/><rect x="6.2" y="10.25" width="3.1" height="2" fill="#fff"/><rect x="10.3" y="10.25" width="3.1" height="2" fill="#fff"/><rect x="14.4" y="10.25" width="3.1" height="2" fill="#fff"/><rect x="6.2" y="13.30" width="3.1" height="2" fill="#fff"/><rect x="10.3" y="13.30" width="3.1" height="2" fill="#fff"/><rect x="14.4" y="13.30" width="3.1" height="2" fill="#fff"/><rect x="6.2" y="16.35" width="3.1" height="2" fill="#fff"/><rect x="10.3" y="16.35" width="3.1" height="2" fill="#fff"/><rect x="14.4" y="16.35" width="3.1" height="2" fill="#fff"/></svg>
</body></html>
